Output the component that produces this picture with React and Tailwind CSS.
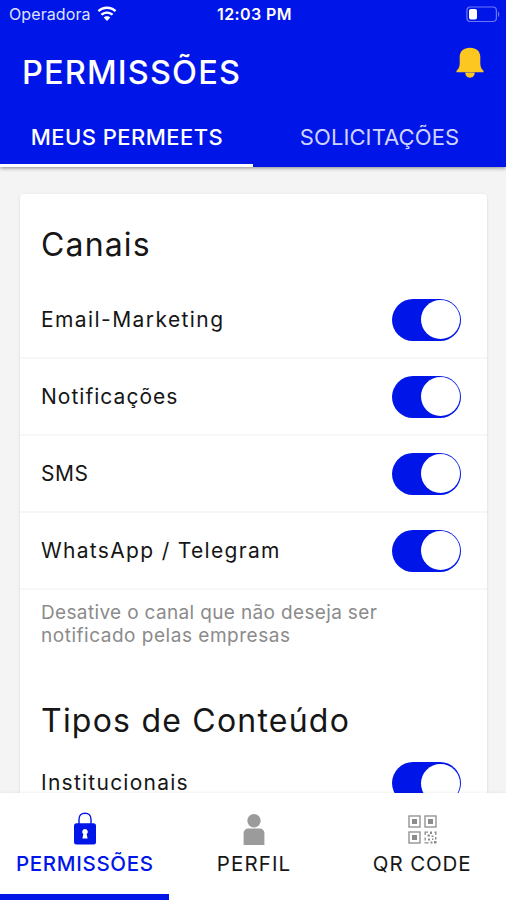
import React from 'react';

const channels = [
  { label: 'Email-Marketing', spacing: 'tracking-[1.42px]' },
  { label: 'Notificações', spacing: 'tracking-[1.02px]' },
  { label: 'SMS', spacing: 'tracking-[0.5px]' },
  { label: 'WhatsApp / Telegram', spacing: 'tracking-[1.32px]' },
];

const WifiIcon = () => (
  <svg width="20" height="16" viewBox="0 0 20 16" fill="white">
    <path d="M10 0.6C6.3 0.6 3 2 0.6 4.3L2.3 6C4.3 4.1 7 3 10 3s5.7 1.1 7.7 3l1.7-1.7C17 2 13.700 0.600 10 0.600Z" />
    <path d="M10 5.400c-2.500 0-4.700 0.900-6.400 2.500l1.700 1.700C6.500 8.500 8.200 7.700 10 7.700s3.500 0.800 4.700 1.900l1.700-1.700C14.700 6.300 12.500 5.400 10 5.400Z" />
    <path d="M10 10.200c-1.300 0-2.500 0.500-3.300 1.200L10 15l3.300-3.600c-0.800-0.700-2-1.200-3.300-1.200Z" />
  </svg>
);

const BatteryIcon = () => (
  <svg width="34" height="17" viewBox="0 0 34 17">
    <rect x="0.900" y="1" width="29.500" height="14.500" rx="3.500" fill="none" stroke="#6c77f5" strokeWidth="1.200" />
    <rect x="3" y="3" width="8" height="10.500" rx="2" fill="white" />
    <path d="M32 5.500c1.700 0.800 1.700 4.700 0 5.500Z" fill="#6c77f5" />
  </svg>
);

const BellIcon = () => (
  <svg width="28" height="31" viewBox="0 0 28 31" fill="#fdc722">
    <path d="M14 0.800C7.500 0.800 3.700 4.500 3.700 10v6.500c0 3-0.900 5.300-3.200 7.300v1.400h27v-1.400C25.200 21.800 24.300 19.500 24.300 16.500V10c0-5.500-3.800-9.200-10.300-9.200Z" />
    <path d="M9.300 25.600h9.400c0 3.200-2 5.200-4.700 5.200s-4.700-2-4.700-5.200Z" />
  </svg>
);

const LockIcon = () => (
  <svg width="22" height="33" viewBox="0 0 22 33">
    <path d="M5 12V7.200C5 3.600 7.400 1.200 11 1.200s6 2.400 6 6V12" fill="none" stroke="#0016e8" strokeWidth="1.400" />
    <rect x="0" y="11.200" width="22" height="21.300" rx="2.500" fill="#0016e8" />
    <path d="M11 17a2.900 2.900 0 0 0-1.700 5.200L8.400 26.600h5.200l-0.900-4.400A2.900 2.900 0 0 0 11 17Z" fill="white" />
  </svg>
);

const PersonIcon = () => (
  <svg width="22" height="32" viewBox="0 0 22 32" fill="#9b9b9b">
    <circle cx="11" cy="7.800" r="6.700" />
    <path d="M0.600 32V20.500c0-3 2-5 5-5h10.800c3 0 5 2 5 5V32Z" />
  </svg>
);

const QrIcon = () => (
  <svg width="29" height="29" viewBox="0 0 29 29">
    <g fill="none" stroke="#8c8c8c" strokeWidth="1.300">
      <rect x="1" y="1" width="11" height="11" />
      <rect x="17" y="1" width="11" height="11" />
      <rect x="1" y="17" width="11" height="11" />
    </g>
    <g fill="#8c8c8c">
      <rect x="4" y="4" width="5" height="5" />
      <rect x="20" y="4" width="5" height="5" />
      <rect x="4" y="20" width="5" height="5" />
      <path d="M16.500 16.500h3.500v1.300h-2.200V20h-1.300ZM22 16.500h2v2.500h-2ZM26.500 16.500h2V20h-1.300v-2h-0.700ZM19.500 19.500h2.500v2h-2.500ZM23.500 20.500h2v1.500h-2ZM16.500 22.500h1.300v3h-1.300ZM20 23.500h2v2h-2ZM24 23.500h1.500v1.500H24ZM27 22h1.500v2.500H27ZM16.500 27.200h4v1.300h-4ZM22.500 26.500h2v2h-2ZM26 26h2.500v2.500h-2.500Z" />
    </g>
  </svg>
);

const Toggle = () => (
  <div className="flex h-[42px] w-[69px] shrink-0 items-center justify-end rounded-full bg-[#0016e8] pr-[1.5px]">
    <div className="size-[39px] rounded-full bg-white" />
  </div>
);

const App = () => (
  <div className="flex h-[900px] w-[506px] flex-col overflow-hidden bg-[#f4f4f4] font-['Inter',sans-serif] text-[#161616]">
    <header className="z-10 h-[167px] shrink-0 bg-[#0016e8] text-white shadow-[0_1px_4px_rgba(0,0,0,0.45)]">
      <div className="grid h-[29px] grid-cols-3 items-center pb-[1px] pl-[9px] pr-[6px]">
        <div className="flex items-center gap-[6px]">
          <span className="text-[16px] tracking-[0.1px] text-[#dfe1ff]">Operadora</span>
          <WifiIcon />
        </div>
        <span className="whitespace-nowrap text-center text-[16px] font-semibold tracking-[0.4px]">12:03 PM</span>
        <div className="flex justify-end">
          <BatteryIcon />
        </div>
      </div>
      <div className="flex h-[79px] items-start justify-between pl-[22px] pr-[22px]">
        <h1 className="pt-[20px] text-[32.500px] font-medium leading-[48px] tracking-[1.15px]">PERMISSÕES</h1>
        <div className="pt-[18px]">
          <BellIcon />
        </div>
      </div>
      <div className="grid h-[59px] grid-cols-2 text-center text-[22px] leading-[58px]">
        <div className="h-[59px] border-b-[3px] border-white pl-[1px] font-medium tracking-[0.45px]">MEUS PERMEETS</div>
        <div className="tracking-[0.1px] text-[#cfd3ff]">SOLICITAÇÕES</div>
      </div>
    </header>

    <main className="min-h-0 flex-1 overflow-hidden pl-[20px] pr-[19px] pt-[27px]">
      <div className="h-[700px] rounded-[4px] bg-white shadow-[0_1px_3px_rgba(0,0,0,0.12)]">
        <h2 className="h-[88px] pl-[21px] pt-[31px] text-[32px] leading-[40px] tracking-[1.15px]">Canais</h2>
        {channels.map(({ label, spacing }) => (
          <div key={label} className="flex h-[77px] items-center justify-between border-b-2 border-[#f7f7f7] pl-[21px] pr-[26px]">
            <span className={`text-[21px] ${spacing}`}>{label}</span>
            <Toggle />
          </div>
        ))}
        <p className="pl-[21px] pt-[11px] text-[19px] leading-[23px] tracking-[0.35px] text-[#8b8b8b]">
          Desative o canal que não deseja ser
          <br />
          <span className="tracking-[0.52px]">notificado pelas empresas</span>
        </p>
        <h2 className="pl-[21px] pt-[54px] text-[32px] leading-[40px] tracking-[1.22px]">Tipos de Conteúdo</h2>
        <div className="flex h-[84px] items-center justify-between pl-[21px] pr-[26px]">
          <span className="text-[21px] tracking-[1.25px]">Institucionais</span>
          <Toggle />
        </div>
      </div>
    </main>

    <nav className="z-10 grid h-[107px] shrink-0 grid-cols-3 bg-white text-[20.500px] shadow-[0_-1px_3px_rgba(0,0,0,0.05)]">
      <div className="flex flex-col items-center border-b-[6px] border-[#0016e8] pl-[1px] pt-[19px] font-medium text-[#0016e8]">
        <LockIcon />
        <span className="pt-[4px] leading-[30px] tracking-[0.7px]">PERMISSÕES</span>
      </div>
      <div className="flex flex-col items-center pl-[2px] pt-[20px]">
        <PersonIcon />
        <span className="pt-[4px] leading-[30px] tracking-[1.1px]">PERFIL</span>
      </div>
      <div className="flex flex-col items-center pl-[1px] pt-[22px]">
        <QrIcon />
        <span className="pt-[5px] leading-[30px] tracking-[0.9px]">QR CODE</span>
      </div>
    </nav>
  </div>
);

export default App;
